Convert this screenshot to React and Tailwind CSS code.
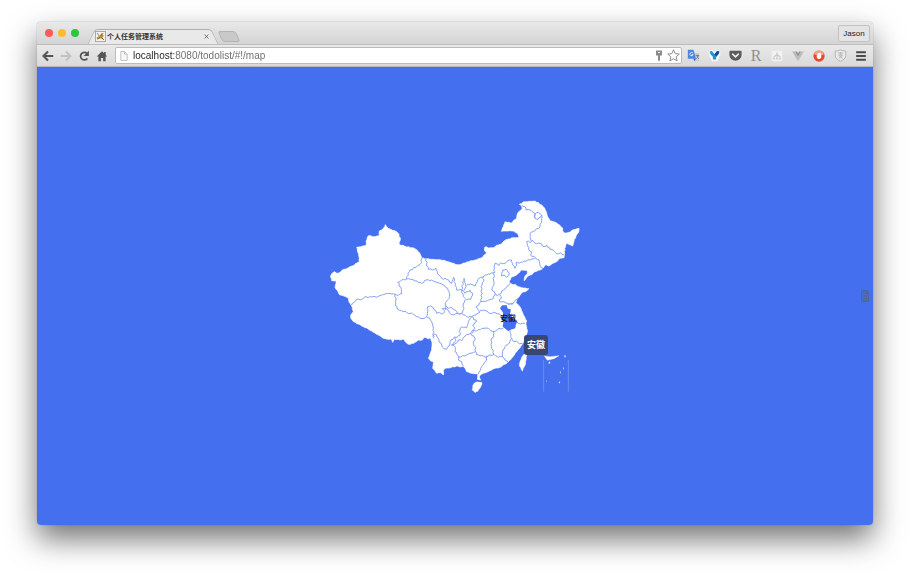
import React from "react";

const OUTLINE =
  "992,827 998,818 1005,815 1010,820 1017,819 1027,810 1038,807 1050,800 1062,796 1072,788 1078,785 1078,773 1074,758 1070,742 1083,740 1099,735 1098,723 1105,707 1125,710 1138,707 1138,693 1150,685 1156,674 1165,685 1178,691 1190,695 1197,703 1201,720 1197,733 1215,739 1237,743 1246,747 1255,755 1262,765 1265,775 1280,776 1295,778 1320,779 1345,785 1372,794 1386,792 1400,786 1425,780 1445,773 1460,758 1453,750 1454,742 1458,740 1466,744 1480,743 1490,736 1505,732 1512,723 1525,717 1540,713 1557,712 1552,700 1540,693 1530,692 1504,694 1510,680 1515,665 1525,667 1535,669 1541,661 1550,655 1551,645 1556,635 1566,626 1566,620 1558,612 1575,605 1605,603 1625,615 1634,625 1640,638 1644,652 1650,662 1664,666 1675,673 1688,684 1690,697 1700,699 1710,697 1720,689 1737,685 1735,698 1728,708 1722,724 1718,738 1700,730 1694,745 1694,760 1692,773 1680,775 1668,786 1655,792 1646,798 1638,794 1625,808 1605,815 1597,823 1585,828 1572,842 1574,830 1582,822 1582,812 1565,810 1550,825 1532,833 1528,848 1536,853 1545,853 1555,860 1570,864 1587,866 1580,873 1565,878 1560,886 1552,895 1548,908 1560,920 1565,932 1570,945 1580,962 1578,975 1582,990 1580,1002 1578,1015 1571,1024 1565,1035 1559,1045 1550,1055 1543,1065 1535,1075 1522,1088 1500,1102 1488,1104 1475,1110 1462,1116 1450,1120 1438,1128 1442,1140 1432,1138 1434,1122 1415,1120 1400,1115 1396,1106 1390,1098 1380,1101 1370,1098 1352,1103 1335,1105 1330,1112 1330,1125 1322,1118 1310,1120 1304,1111 1298,1105 1300,1085 1291,1082 1285,1075 1290,1063 1295,1050 1296,1032 1293,1015 1284,1017 1275,1012 1267,1020 1255,1020 1242,1030 1225,1033 1217,1027 1210,1017 1200,1020 1182,1017 1178,1027 1174,1017 1162,1018 1150,1015 1135,1005 1120,997 1105,987 1090,980 1075,972 1060,965 1053,956 1052,945 1060,935 1057,925 1053,915 1047,906 1045,895 1032,888 1020,885 1010,870 1005,862 1008,850 1008,842 995,842 992,827";

const BORDERS = [
  "1055,915 1062,908 1070,897 1082,899 1092,892 1115,891 1135,889 1155,882 1170,880 1185,883",
  "1185,883 1195,886 1205,881 1204,868 1193,847 1205,840 1220,837 1224,820 1230,810 1248,802 1265,788 1265,775",
  "1220,837 1232,838 1245,843 1265,850 1278,840 1295,840 1308,846 1320,850 1333,856 1343,865 1348,880 1348,895 1340,903 1335,912 1338,930",
  "1185,883 1188,900 1186,915 1192,927 1205,932 1220,937 1240,943 1260,955 1272,955 1280,950",
  "1280,950 1283,935 1283,920 1292,917 1300,923 1310,940 1318,937 1325,942 1335,935 1327,925 1340,925",
  "1280,950 1289,954 1295,965 1300,985 1300,1015",
  "1278,777 1280,792 1285,808 1297,810 1308,805 1312,820 1325,835 1340,838 1355,850 1360,832 1366,850 1370,870 1385,870 1392,835 1398,860 1392,872",
  "1385,870 1395,880 1410,870 1418,885 1412,898 1400,900 1390,890 1385,870",
  "1335,915 1345,925 1352,922 1365,930 1372,940 1385,940 1392,925 1390,912 1395,900",
  "1400,855 1412,852 1425,858 1432,845 1437,835 1448,831 1455,825 1470,823 1483,815 1482,800 1485,790 1497,797 1502,789 1515,790 1522,783 1535,780 1538,795 1545,805 1550,797 1548,787 1558,790 1572,783 1590,780 1605,773",
  "1605,773 1592,765 1594,755 1586,748 1580,725 1595,725 1590,712 1590,700 1605,692 1620,680 1625,662 1625,645 1614,658 1605,655 1603,640 1590,630 1578,630 1575,620 1565,615",
  "1605,655 1606,641 1615,637 1625,645",
  "1595,720 1605,730 1620,730 1632,740 1640,735 1650,748 1660,750 1670,762 1682,758 1692,765",
  "1605,773 1617,780 1620,795 1628,808",
  "1450,830 1450,845 1443,860 1446,880 1443,905 1462,902 1480,895 1485,880 1476,868 1482,850 1480,835 1485,815",
  "1485,880 1492,887 1500,882 1510,870 1520,860 1530,850",
  "1505,820 1508,810 1518,808 1528,820 1520,832 1513,825 1505,828 1505,820",
  "1500,885 1504,895 1498,904 1515,906 1528,912 1540,910 1546,900 1555,895",
  "1298,1010 1303,1002 1310,1005 1317,1022 1325,1035 1332,1046 1340,1048 1347,1038 1350,1025 1362,1012 1372,1012 1380,1005 1380,990 1385,980 1400,983 1405,965 1415,950",
  "1365,1010 1368,1022 1355,1035 1366,1042 1365,1055 1375,1068 1375,1080 1385,1085 1390,1098",
  "1355,1035 1368,1030 1375,1020 1385,1022 1395,1008 1412,1000 1425,1015 1420,1030 1427,1042 1427,1055 1410,1060 1395,1068 1375,1070",
  "1340,925 1348,938 1360,945 1372,940 1385,940 1400,950 1415,950 1430,965 1418,975 1425,985 1415,1000",
  "1415,950 1428,945 1440,935 1428,922 1436,916 1443,905",
  "1440,930 1455,932 1470,940 1485,938 1502,945",
  "1412,1000 1418,990 1430,993 1445,985 1465,985 1472,992 1485,995 1497,985 1510,985",
  "1480,995 1482,1010 1473,1020 1475,1040 1482,1063 1470,1065 1460,1072 1445,1066 1430,1065 1427,1055",
  "1460,1067 1458,1082 1450,1095 1442,1105 1435,1122",
  "1482,1063 1495,1072 1507,1070 1515,1080 1525,1088",
  "1507,1070 1508,1055 1515,1040 1527,1030 1535,1015 1530,992",
  "1535,1015 1542,1025 1550,1023 1558,1032 1568,1030",
  "1550,965 1562,972 1575,970",
  "1525,915 1540,910",
];

const ANHUI =
  "1500,925 1507,916 1520,915 1524,926 1532,928 1530,940 1538,952 1552,963 1547,975 1545,985 1535,988 1525,993 1516,986 1508,980 1510,968 1503,955 1510,943 1506,933 1500,925";
const HAINAN = "1418,1158 1424,1148 1432,1145 1446,1147 1444,1157 1440,1165 1434,1174 1425,1178 1416,1170 1418,1158";
const TAIWAN = "1565,1072 1572,1063 1580,1061 1579,1078 1577,1092 1570,1105 1567,1114 1558,1098 1560,1084 1565,1072";

// Splits each segment and nudges the new points so coasts and borders look natural.
function rough(points, amount) {
  const pts = points.split(" ").map((p) => p.split(",").map(Number));
  const out = [pts[0]];
  for (let i = 1; i < pts.length; i++) {
    const [ax, ay] = pts[i - 1];
    const [bx, by] = pts[i];
    const len = Math.hypot(bx - ax, by - ay);
    const n = Math.max(1, Math.round(len / 6));
    for (let k = 1; k < n; k++) {
      const d = Math.sin((ax + by) * 12.9 + k * 78.2) * amount;
      const t = k / n;
      out.push([
        Math.round(ax + (bx - ax) * t - ((by - ay) / len) * d),
        Math.round(ay + (by - ay) * t + ((bx - ax) / len) * d),
      ]);
    }
    out.push([bx, by]);
  }
  return out.map((p) => p.join(",")).join(" ");
}

function ChinaMap() {
  return (
    <svg viewBox="960 573 810 633" className="block w-full" role="img" aria-label="中国地图">
      <g fill="#fff" stroke="#fff" strokeLinejoin="round">
        <polygon points={rough(OUTLINE, 1)} strokeWidth="2" />
        <polygon points={rough(HAINAN, 1)} />
        <polygon points={rough(TAIWAN, 1)} />
        <polygon points="1633,1068 1650,1070 1677,1067 1662,1076 1642,1081" />
      </g>
      <path
        d="M1692 1066l6 1-3 7zM1646 1087l4-3 1 6-5 2zM1689 1100l3 8h-3zM1680 1116l3-3-1 9zM1638 1140l2 4-2 3zM1676 1147l5-4-3 8z"
        fill="#fff"
        opacity=".85"
      />
      <g fill="none" stroke="#86a2f5" strokeWidth="3" strokeLinejoin="round">
        {BORDERS.map((b) => (
          <polyline key={b} points={rough(b, 2)} />
        ))}
      </g>
      <polygon points={rough(ANHUI, 1)} fill="#446fee" />
      <path d="M1631 1080v95M1705 1080v95" stroke="#7e9cf5" strokeWidth="2" />
    </svg>
  );
}

function Icon({ children, box = "0 0 16 16", className = "size-3" }) {
  return (
    <svg viewBox={box} className={className} fill="none" aria-hidden="true">
      {children}
    </svg>
  );
}

function IconButton({ label, children }) {
  return (
    <button type="button" aria-label={label} className="flex size-4 shrink-0 items-center justify-center">
      {children}
    </button>
  );
}

function TabStrip() {
  return (
    <header className="flex h-[22px] items-end bg-linear-to-b from-[#e9e9e9] to-[#d4d4d4] pr-[3px] pl-2">
      <div className="flex gap-[5px] self-center">
        <button type="button" aria-label="关闭" className="size-2 rounded-full bg-[#fc5b57]" />
        <button type="button" aria-label="最小化" className="size-2 rounded-full bg-[#fdbc2e]" />
        <button type="button" aria-label="缩放" className="size-2 rounded-full bg-[#28c840]" />
      </div>
      <div className="relative isolate ml-3 flex h-[15px] w-[124px] items-center gap-px pr-1.5 pl-1">
        <span className="absolute inset-y-0 left-0 -z-10 w-2/3 -skew-x-25 rounded-tl-sm border-t border-l border-[#b0b0b0] bg-[#e9e9e9]" />
        <span className="absolute inset-y-0 right-0 -z-10 w-2/3 skew-x-25 rounded-tr-sm border-t border-r border-[#b0b0b0] bg-[#e9e9e9]" />
        <Icon className="size-[11px] shrink-0">
          <path d="M.5.5h15v15H.5z" fill="#f4f2ee" stroke="#777" />
          <path d="M2 10c2-3 4-2 5-4l3-3 2 3 2-1-3 4 2 4-4-2-5 1z" fill="#c79a45" />
          <path d="M3 3l3 4M12 3L9 6M3 12l4-3M9 9l4 4M8 6l2 2" stroke="#54493a" />
        </Icon>
        <span className="grow text-[7px] leading-4 font-bold whitespace-nowrap text-[#333]">个人任务管理系统</span>
        <button type="button" aria-label="关闭标签页">
          <Icon box="0 0 6 6" className="size-[5px]">
            <path d="M.7.7l4.6 4.6M5.3.7L.7 5.3" stroke="#555" />
          </Icon>
        </button>
      </div>
      <button
        type="button"
        aria-label="新标签页"
        className="mb-0.5 ml-[5px] h-[11px] w-[18px] skew-x-25 rounded-[3px] border border-[#b4b4b4] bg-[#c9c9c9]"
      />
      <button
        type="button"
        className="ml-auto h-[17px] w-8 self-center rounded-xs border border-[#c2c2c2] bg-[#e4e4e4] text-[8px] leading-4 text-[#222]"
      >
        Jason
      </button>
    </header>
  );
}

function Toolbar() {
  return (
    <nav className="flex h-[23px] items-center border-t border-b border-t-[#bdbdbd] border-b-[#b5b5b5] bg-linear-to-b from-[#e9e9e9] to-[#dadada] pr-1 pl-[3px]">
      <div className="flex gap-0.5">
        <IconButton label="后退">
          <Icon><path d="M15 8H3M8 2L2 8l6 6" stroke="#555" strokeWidth="2.8" /></Icon>
        </IconButton>
        <IconButton label="前进">
          <Icon><path d="M1 8h12M8 2l6 6-6 6" stroke="#c2c2c2" strokeWidth="2.4" /></Icon>
        </IconButton>
        <IconButton label="重新加载">
          <Icon>
            <path d="M12.5 11.2A5 5 0 1 1 12 4.8" stroke="#555" strokeWidth="2.3" />
            <path d="M14.5 1v7h-7z" fill="#555" />
          </Icon>
        </IconButton>
        <IconButton label="主页">
          <Icon><path d="M8 1.5L1 8.500h2.200V15h3.300v-4.500h3V15h3.300V8.500H15l-2-2V2.500h-2.200v1.800z" fill="#555" /></Icon>
        </IconButton>
      </div>
      <div className="ml-[5px] flex h-[17px] min-w-0 grow items-center rounded-xs border border-[#bbb] bg-white pl-1">
        <Icon box="0 0 8 11" className="mr-[5px] h-[10px] w-2 shrink-0">
          <path d="M.5.5h4l3 3v7h-7zM4.500.5v3h3" fill="#f7f7f7" stroke="#bcbcbc" />
        </Icon>
        <input
          aria-label="地址"
          defaultValue="localhost:8080/todolist/#!/map"
          className="min-w-0 grow bg-linear-to-r from-[#222] from-[41px] to-[#6a6a6a] to-[41px] bg-clip-text text-[10px] leading-4 text-transparent outline-none"
        />
        <Icon box="0 0 8 12" className="mr-0.5 h-3 w-2 shrink-0">
          <path d="M1 .5h6v5H5V10l-1 1.500L3 10V5.500H1z" fill="#8a8a8a" />
          <path d="M3 2.500h2" stroke="#fff" />
        </Icon>
        <IconButton label="收藏">
          <Icon className="size-[13px]">
            <path d="M8 1l2.100 4.700 5 .5-3.800 3.400 1.100 5L8 12l-4.400 2.600 1.100-5L.9 6.200l5-.5z" stroke="#8a8a8a" strokeWidth="1.200" />
          </Icon>
        </IconButton>
      </div>
      <div className="ml-[3px] flex gap-[5px]">
        <IconButton label="翻译">
          <Icon className="size-[13px]">
            <path d="M7 5h8v10H9z" fill="#c9ccd1" />
            <path d="M1 1h7l3 11H1z" fill="#4a86e8" />
            <path d="M8 12h3l-2 3z" fill="#2f62c0" />
            <path d="M7.300 5.200A2 2 0 1 0 7.500 7H5.800" stroke="#fff" />
            <path d="M10.500 8H15M12.500 7v1c0 2 1 3 2.200 4M14 8c-.5 2-1.500 3-2.500 4" stroke="#777" />
          </Icon>
        </IconButton>
        <IconButton label="扩展 Y">
          <Icon className="size-[13px]">
            <path d="M1 3l4-2 3 3 3-3 4 2v4l-4 8H5L1 7z" fill="#f8fbfe" />
            <path d="M2 3.500C4 2 5 2.500 6 4l2 2.500L10 4c1-1.500 2-2 4-.500-.500 3-2 4-4 6V13H6V9.500c-2-2-3.500-3-4-6z" fill="#1b93dc" />
            <path d="M8 6.500L10 4c1-1.500 2-2 4-.500-.500 3-2 4-4 6z" fill="#124c93" />
          </Icon>
        </IconButton>
        <IconButton label="Pocket">
          <Icon className="size-[13px]">
            <path d="M1.500 2h13a1 1 0 0 1 1 1v4.500a7.500 7 0 0 1-15 0V3a1 1 0 0 1 1-1z" fill="#5c5c5c" />
            <path d="M4.500 6.300L8 9.700l3.500-3.400" stroke="#eee" strokeWidth="1.900" strokeLinecap="round" />
          </Icon>
        </IconButton>
        <button type="button" aria-label="扩展 R" className="size-4 font-['Liberation_Serif',serif] text-[16px] leading-4 text-[#909090]">
          R
        </button>
        <IconButton label="站点地图">
          <Icon>
            <rect x="1" y="1" width="14" height="14" rx="2" fill="#f3f3f3" />
            <path d="M8 4v8M4 12V9l4-3 4 3v3M2.500 12h3M6.500 12h3M10.500 12h3M7 4h2" stroke="#c9c9c9" strokeWidth="1.500" />
          </Icon>
        </IconButton>
        <IconButton label="Vue">
          <Icon>
            <path d="M0 2h4l4 7 4-7h4L8 15z" fill="#bdbdbd" />
            <path d="M4 2h2.500L8 4.700 9.500 2H12L8 9z" fill="#929292" />
          </Icon>
        </IconButton>
        <IconButton label="拦截广告">
          <Icon>
            <circle cx="8" cy="8" r="7.500" fill="#e5482d" />
            <path d="M1.500 6a6.500 5.500 0 0 1 13 0c-4 2-9 2-13 0z" fill="#f3a08f" />
            <path d="M5 7l1 .5V4.500h1V4h1v-.5h1V4h1v1h1v4.500L9.500 12h-3L5 9.500z" fill="#fff" />
          </Icon>
        </IconButton>
        <IconButton label="安全">
          <Icon className="size-[13px]">
            <path d="M8 1c2 1 4 1.500 6.500 1.500V8c0 3-2.500 5.500-6.500 7C4 13.500 1.500 11 1.500 8V2.500C4 2.500 6 2 8 1z" fill="#e9e9e9" stroke="#b5b5b5" strokeWidth="1.200" />
            <path d="M5 5h6M8 4v3M5.500 7.500h5L6 11.500M6 8l4.500 3.500" stroke="#aaa" />
          </Icon>
        </IconButton>
        <IconButton label="菜单">
          <Icon><path d="M1.500 3h13M1.500 8h13M1.500 13h13" stroke="#4c4c4c" strokeWidth="2.600" /></Icon>
        </IconButton>
      </div>
    </nav>
  );
}

export default function App() {
  return (
    <div className="flex min-h-screen flex-col bg-white px-[37px] pt-[22px] pb-[53px] font-['Liberation_Sans','Noto_Sans_CJK_SC',sans-serif]">
      <div className="flex grow flex-col overflow-hidden rounded-[4px] shadow-[0_0_1px_rgba(0,0,0,0.5),0_14px_30px_rgba(0,0,0,0.55)]">
        <TabStrip />
        <Toolbar />
        <main className="relative flex grow items-center justify-center bg-[#446fee]">
          <div className="relative w-[270px]">
            <ChinaMap />
            <span className="absolute top-[120px] left-[180px] text-[8px] leading-4 font-medium text-[#111]">安徽</span>
            <div
              role="tooltip"
              className="absolute top-[144px] left-[204px] rounded-[3px] bg-[#384670] px-[3px] text-[9px] leading-5 font-bold text-white"
            >
              安徽
            </div>
          </div>
          <button type="button" aria-label="数据视图" className="absolute inset-y-0 right-1 my-auto h-3">
            <Icon box="0 0 8 11" className="h-3 w-2">
              <path d="M.5.5h5l2 2.500v7.500h-7zM5 .5V3h2.500M2 3h2M2 5.500h4M2 8h4" fill="none" stroke="#53649a" strokeWidth="1.300" />
            </Icon>
          </button>
        </main>
      </div>
    </div>
  );
}
